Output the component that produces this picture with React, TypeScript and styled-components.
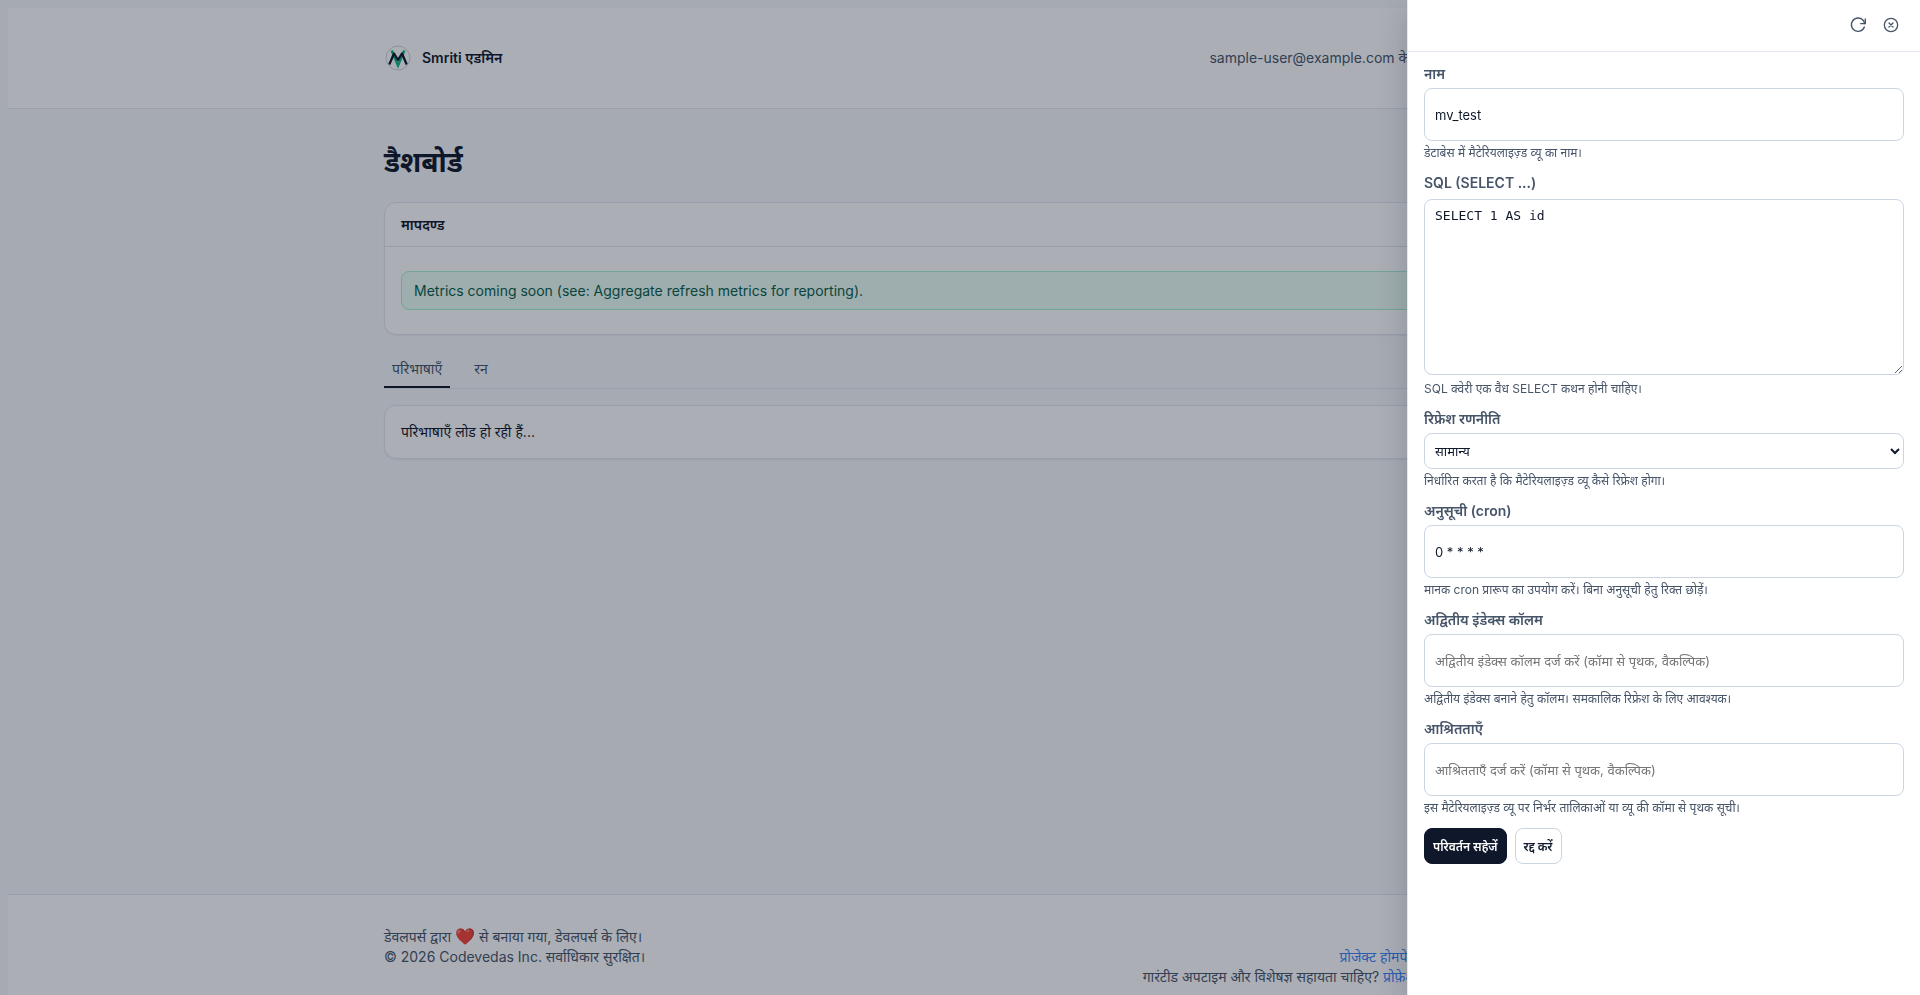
import React from "react";
import styled, { createGlobalStyle, css } from "styled-components";

const GlobalStyle = createGlobalStyle`
  html { background: #f8fafc; }
  body {
    margin: 8px;
    overflow: hidden;
    background: #f8fafc;
    color: #0f172a;
    font-family: Inter, "Noto Sans", sans-serif;
    font-size: 14px;
    line-height: 20px;
  }
  *, *::before, *::after { box-sizing: border-box; }
`;

const Page = styled.div`
  display: flex;
  flex-direction: column;
  min-height: 100vh;
`;

const Container = styled.div`
  width: 100%;
  max-width: 1152px;
  margin: 0 auto;
`;

const Header = styled.header`
  background: #fff;
  border-bottom: 1px solid #e2e8f0;
`;

const HeaderRow = styled(Container)`
  display: flex;
  align-items: center;
  justify-content: space-between;
  height: 100px;
  color: #475569;
`;

const Brand = styled.a`
  display: flex;
  align-items: center;
  gap: 10px;
  color: #0f172a;
  font-weight: 600;
  text-decoration: none;
`;

const Main = styled.main`
  flex: 1;
`;

const Title = styled.h1`
  margin: 32px 0 19px;
  font-size: 28px;
  line-height: 42px;
  font-weight: 700;
`;

const Card = styled.section`
  background: #fff;
  border: 1px solid #e2e8f0;
  border-radius: 12px;
  box-shadow: 0 1px 2px rgba(15, 23, 42, 0.06);
`;

const CardTitle = styled.h2`
  margin: 0;
  padding: 12px 16px;
  border-bottom: 1px solid #e2e8f0;
  font-size: 14px;
  line-height: 19px;
  font-weight: 600;
`;

const CardBody = styled.div`
  padding: 24px 16px;
`;

const Loading = styled.p`
  margin: 0;
  padding: 16px;
  line-height: 20px;
`;

const Notice = styled.p`
  margin: 0;
  padding: 8px 12px;
  border: 1px solid #a7f3d0;
  border-radius: 8px;
  background: #ecfdf5;
  color: #065f46;
  line-height: 21px;
`;

const Tabs = styled.nav`
  display: flex;
  gap: 16px;
  margin: 16px 0;
  border-bottom: 1px solid #e2e8f0;
`;

const Tab = styled.button<{ $active?: boolean }>`
  padding: 8px;
  border: 0;
  border-bottom: 2px solid ${(p) => (p.$active ? "#0f172a" : "transparent")};
  background: none;
  color: #475569;
  font: inherit;
  line-height: 19px;
`;

const Footer = styled.footer`
  padding: 32px 0 16px;
  background: #fff;
  border-top: 1px solid #e2e8f0;
  color: #475569;
`;

const FooterRow = styled(Container)`
  display: flex;
  justify-content: space-between;
`;

const Heart = styled.span`
  font-size: 16px;
  line-height: 16px;
`;

const FooterLinks = styled.div`
  padding-top: 20px;
  text-align: right;
`;

const Link = styled.a`
  color: #3b82f6;
  text-decoration: none;
`;

const Overlay = styled.div`
  position: fixed;
  inset: 0;
  display: flex;
  justify-content: flex-end;
  background: rgba(15, 23, 42, 0.35);
`;

const Drawer = styled.aside`
  width: 513px;
  max-width: 100%;
  overflow: auto;
  background: #fff;
  border-left: 1px solid #e2e8f0;
  box-shadow: 0 10px 30px rgba(15, 23, 42, 0.2);
`;

const DrawerBar = styled.div`
  display: flex;
  justify-content: flex-end;
  gap: 5px;
  padding: 11px 15px 12px;
  border-bottom: 1px solid #e2e8f0;
`;

const IconButton = styled.button`
  display: flex;
  padding: 6px;
  border: 0;
  background: none;
  color: #475569;
`;

const Form = styled.form`
  display: flex;
  flex-direction: column;
  gap: 12px;
  padding: 12px 16px;
`;

const Field = styled.div`
  display: flex;
  flex-direction: column;
  gap: 4px;
`;

const Label = styled.label`
  color: #475569;
  font-weight: 600;
`;

const Hint = styled.small`
  color: #475569;
  font-size: 12px;
  line-height: 16px;
`;

const control = css`
  width: 100%;
  border: 1px solid #cbd5e1;
  border-radius: 8px;
  background: #fff;
  color: #0f172a;
  font-family: inherit;
  font-size: 13px;
`;

const Input = styled.input`
  ${control}
  height: 53px;
  padding: 8px 10px;
  &::placeholder { color: #757575; }
`;

const TextArea = styled.textarea`
  ${control}
  display: block;
  height: 176px;
  margin: 2px 0;
  padding: 8px 10px;
  font-family: "DejaVu Sans Mono", monospace;
  line-height: 16px;
  resize: vertical;
`;

const Select = styled.select`
  ${control}
  height: 36px;
  padding: 0 6px;
`;

const Actions = styled.div`
  display: flex;
  gap: 8px;
`;

const Button = styled.button<{ $primary?: boolean }>`
  height: 36px;
  padding: 0 8px;
  border: 1px solid ${(p) => (p.$primary ? "#0f172a" : "#cbd5e1")};
  border-radius: 8px;
  background: ${(p) => (p.$primary ? "#0f172a" : "#fff")};
  color: ${(p) => (p.$primary ? "#fff" : "#0f172a")};
  font-family: inherit;
  font-size: 12px;
  font-weight: 600;
`;

const Logo = () => (
  <svg width="28" height="28" viewBox="0 0 28 28" fill="none" aria-hidden="true">
    <circle cx="14" cy="14" r="12" stroke="#cbd5e1" strokeWidth="1" />
    <path d="M7.700 6.500 14 21.500 20.300 6.500" stroke="#10b981" strokeWidth="2.600" />
    <path d="M5.300 20.500 10 9.500 14 16 18 9.500 22.700 20.500" stroke="#0f172a" strokeWidth="2.300" strokeLinejoin="round" />
  </svg>
);

const iconProps = {
  width: 16,
  height: 16,
  viewBox: "0 0 24 24",
  fill: "none",
  stroke: "currentColor",
  strokeWidth: 2,
  strokeLinecap: "round",
  strokeLinejoin: "round",
  overflow: "visible",
} as const;

const RefreshIcon = () => (
  <svg {...iconProps}>
    <path d="M23 3v7h-7" />
    <path d="M22 10A10 10 0 1 0 21.500 15" />
  </svg>
);

const CloseIcon = () => (
  <svg {...iconProps}>
    <circle cx="12" cy="12" r="10" />
    <path d="m15 9-6 6M9 9l6 6" />
  </svg>
);

type FieldRowProps = { id: string; label: string; hint: string; children: React.ReactNode };

const FieldRow = ({ id, label, hint, children }: FieldRowProps) => (
  <Field>
    <Label htmlFor={id}>{label}</Label>
    {children}
    <Hint>{hint}</Hint>
  </Field>
);

export default function App() {
  return (
    <>
      <GlobalStyle />
      <Page>
        <Header>
          <HeaderRow>
            <Brand href="#">
              <Logo />
              Smriti एडमिन
            </Brand>
            <span>sample-user@example.com के रूप में साइन इन किया है</span>
          </HeaderRow>
        </Header>
        <Main>
          <Container>
            <Title>डैशबोर्ड</Title>
            <Card>
              <CardTitle>मापदण्ड</CardTitle>
              <CardBody>
                <Notice>Metrics coming soon (see: Aggregate refresh metrics for reporting).</Notice>
              </CardBody>
            </Card>
            <Tabs>
              <Tab type="button" $active>परिभाषाएँ</Tab>
              <Tab type="button">रन</Tab>
            </Tabs>
            <Card>
              <Loading>परिभाषाएँ लोड हो रही हैं...</Loading>
            </Card>
          </Container>
        </Main>
        <Footer>
          <FooterRow>
            <div>
              डेवलपर्स द्वारा <Heart>❤️</Heart> से बनाया गया, डेवलपर्स के लिए।
              <br />© 2026 Codevedas Inc. सर्वाधिकार सुरक्षित।
            </div>
            <FooterLinks>
              <Link href="#">प्रोजेक्ट होमपेज</Link> | <Link href="#">समस्या की रिपोर्ट करें</Link>
              <br />
              गारंटीड अपटाइम और विशेषज्ञ सहायता चाहिए? <Link href="#">प्रोफ़ेशनल सहायता प्राप्त करिए</Link>
            </FooterLinks>
          </FooterRow>
        </Footer>
      </Page>
      <Overlay>
        <Drawer role="dialog" aria-modal="true">
          <DrawerBar>
            <IconButton type="button" aria-label="Refresh"><RefreshIcon /></IconButton>
            <IconButton type="button" aria-label="Close"><CloseIcon /></IconButton>
          </DrawerBar>
          <Form>
            <FieldRow id="name" label="नाम" hint="डेटाबेस में मैटेरियलाइज़्ड व्यू का नाम।">
              <Input id="name" defaultValue="mv_test" />
            </FieldRow>
            <FieldRow id="sql" label="SQL (SELECT ...)" hint="SQL क्वेरी एक वैध SELECT कथन होनी चाहिए।">
              <TextArea id="sql" spellCheck={false} defaultValue="SELECT 1 AS id" />
            </FieldRow>
            <FieldRow id="strategy" label="रिफ्रेश रणनीति" hint="निर्धारित करता है कि मैटेरियलाइज़्ड व्यू कैसे रिफ्रेश होगा।">
              <Select id="strategy">
                <option>सामान्य</option>
              </Select>
            </FieldRow>
            <FieldRow id="cron" label="अनुसूची (cron)" hint="मानक cron प्रारूप का उपयोग करें। बिना अनुसूची हेतु रिक्त छोड़ें।">
              <Input id="cron" defaultValue="0 * * * *" />
            </FieldRow>
            <FieldRow id="index" label="अद्वितीय इंडेक्स कॉलम" hint="अद्वितीय इंडेक्स बनाने हेतु कॉलम। समकालिक रिफ्रेश के लिए आवश्यक।">
              <Input id="index" placeholder="अद्वितीय इंडेक्स कॉलम दर्ज करें (कॉमा से पृथक, वैकल्पिक)" />
            </FieldRow>
            <FieldRow id="deps" label="आश्रितताएँ" hint="इस मैटेरियलाइज़्ड व्यू पर निर्भर तालिकाओं या व्यू की कॉमा से पृथक सूची।">
              <Input id="deps" placeholder="आश्रितताएँ दर्ज करें (कॉमा से पृथक, वैकल्पिक)" />
            </FieldRow>
            <Actions>
              <Button type="button" $primary>परिवर्तन सहेजें</Button>
              <Button type="button">रद्द करें</Button>
            </Actions>
          </Form>
        </Drawer>
      </Overlay>
    </>
  );
}
